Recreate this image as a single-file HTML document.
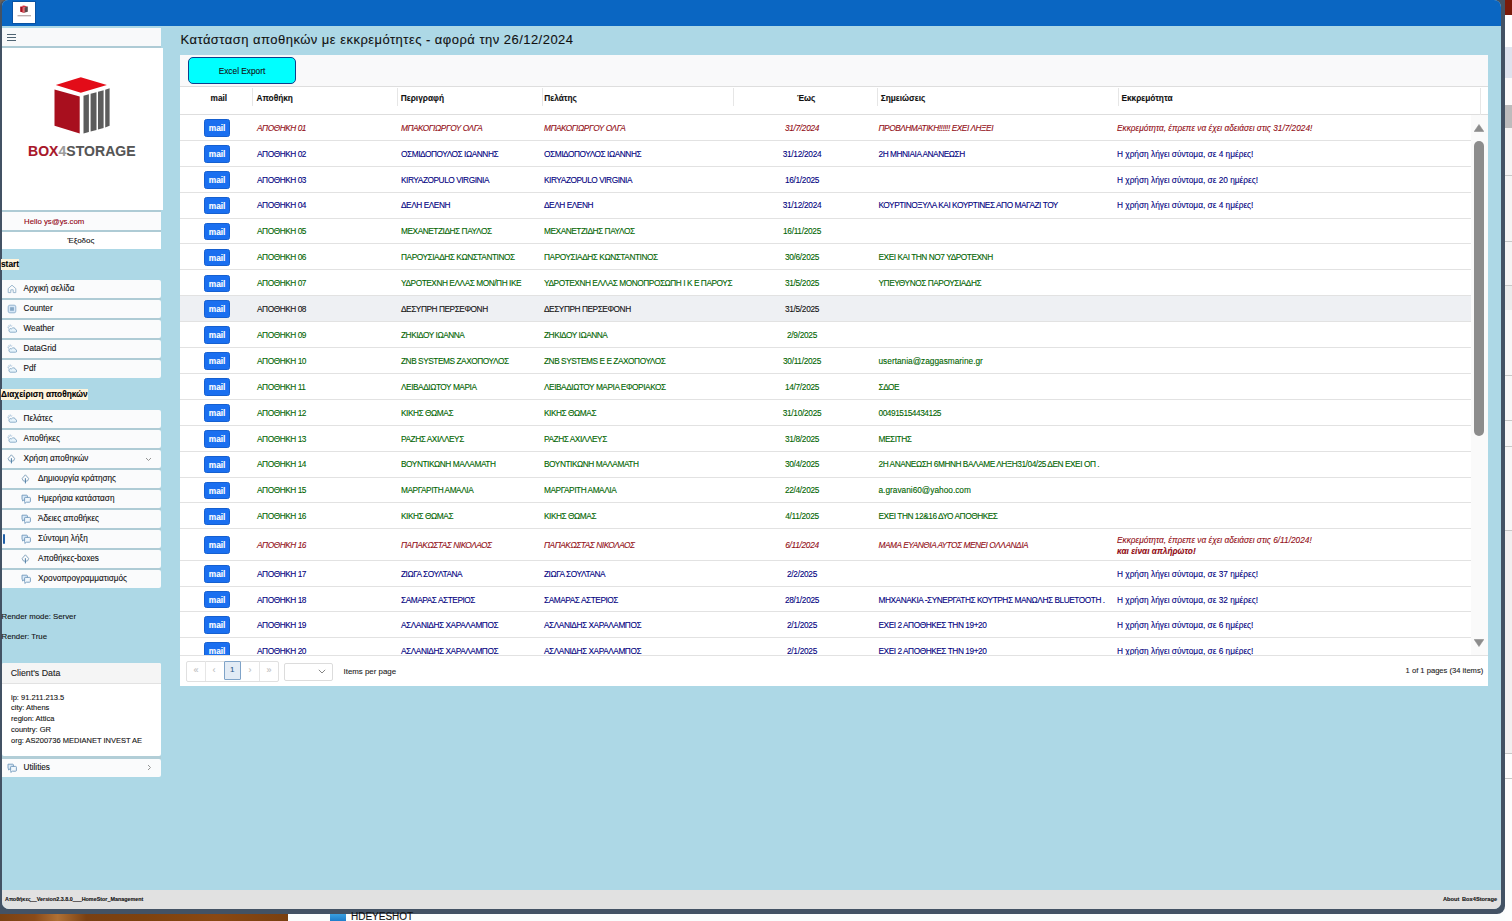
<!DOCTYPE html>
<html><head><meta charset="utf-8">
<style>
*{box-sizing:border-box}
html,body{margin:0;padding:0}
body *{-webkit-text-stroke:0.1px currentColor}
body{width:1512px;height:921px;overflow:hidden;position:relative;background:#fbfcfc;font-family:"Liberation Sans",sans-serif;color:#111}
.a{position:absolute}
#frame{left:0;top:0;width:1505px;height:913.5px;background:#435264;border-radius:6px 0 8px 0}
#win{left:1.5px;top:0;width:1499px;height:909px;background:#add8e6;border-radius:6px 7px 7px 7px;overflow:hidden}
#title{left:1.5px;top:0;width:1499px;height:25.5px;background:#0a66c2;border-radius:6px 7px 0 0}
#appicon{left:13px;top:2px;width:22px;height:21px;background:#fff}
#footer{left:1.5px;top:890px;width:1499px;height:19px;background:#e1e1e1;border-radius:0 0 7px 7px;font-size:5.4px;font-weight:bold;color:#111}
.sb{position:absolute;left:1.5px;width:159.5px;background:#fafbfc}
.gap{position:absolute;left:1.5px;width:159.5px;height:2px;background:#aecbd5}
.nav{position:absolute;left:1.5px;width:159.5px;height:18px;background:#fafbfc;border-radius:0 2px 2px 0}
.nav .ic{position:absolute;top:3.6px;line-height:0}
.nav .nt{position:absolute;top:0;line-height:18px;font-size:8.2px;color:#111;white-space:nowrap}
.nav .chev{position:absolute}
.nav .ind{position:absolute;left:1.5px;top:4px;width:2px;height:10px;background:#1f5fa8;border-radius:1px}
.lbl{position:absolute;left:1px;background:#fff5dc;font-weight:bold;font-size:8.3px;color:#000;white-space:nowrap}
#panel{left:180px;top:54.5px;width:1307.8px;height:631.4px;background:#fff}
#toolbar{left:180px;top:54.5px;width:1307.8px;height:32px;background:#f9f9fa;border-bottom:1px solid #dedede}
#excel{left:188.4px;top:57.2px;width:107.2px;height:26.4px;background:#00ffff;border:1.8px solid #0f3f8c;border-radius:5px;font-size:8.3px;text-align:center;line-height:27px;color:#111}
#hdr{left:180px;top:87px;width:1307.8px;height:28px;border-bottom:1px solid #dedede;background:#fff}
.hs{position:absolute;top:1px;width:1px;height:18px;background:#e6e6e6}
.ht{position:absolute;top:5.5px;font-size:8.3px;font-weight:bold;white-space:nowrap;color:#111}
#body{left:180px;top:115px;width:1291px;height:539.8px;overflow:hidden}
.row{position:absolute;left:0;width:1291px;border-bottom:1px solid #e2e2e2}
.row.hv{background:#eef0f3}
.mb{position:absolute;left:24.2px;width:25.8px;height:17.6px;background:#1a6ff0;border:0.6px solid #1660d0;border-radius:2.5px;color:#fff;font-size:8.3px;font-weight:bold;text-align:center;line-height:17px}
.c{position:absolute;top:0.8px;line-height:25px;font-size:8.3px;white-space:nowrap}
.c.u{letter-spacing:-0.45px}
.c.d{left:552px;width:140px;text-align:center;letter-spacing:-0.3px}
.row.r .c{color:#920c14;font-style:italic}
.row.n .c{color:#000080}
.row.g .c{color:#006400}
.row.k .c{color:#111}
.row.tall .c{line-height:31px}
.row.tall .c.x2{line-height:11.6px;top:5.2px}
#scroll{left:1471px;top:115px;width:16.8px;height:539.8px;background:#fafafa}
#pager{left:180px;top:654.8px;width:1307.8px;height:31.1px;border-top:1px solid #e2e2e2;background:#fff}
</style></head><body>
<div class="a" style="left:0;top:0;width:8px;height:8px;background:#6a6058"></div><div class="a" style="left:0;top:905px;width:10px;height:9px;background:#4a5868"></div>
<div class="a" style="left:1494px;top:0;width:11.5px;height:10px;background:#4d5158"></div>
<div id="frame" class="a"></div>
<div id="win" class="a"></div>
<div id="title" class="a"></div>
<div id="appicon" class="a" style="box-shadow:0 0 0 0.8px #0a4f9c">
 <svg width="22" height="21" viewBox="0 0 22 21"><path d="M7.5 4.2 L10.8 3.6 L14.8 4.4 L11.2 5.2 Z" fill="#d8303a"/><path d="M7.2 4.6 L11 5.6 V10.8 L7.2 9.8 Z" fill="#a80f1e"/><path d="M11 5.6 L14.8 4.6 V9.8 L11 10.8 Z" fill="#5a4a4a"/><rect x="9.5" y="5.6" width="2.2" height="5" fill="#e26a70"/><rect x="4.5" y="13.2" width="13.5" height="1.1" fill="#6a4848" opacity="0.55"/></svg>
</div>

<!-- sidebar -->
<div class="sb" style="top:28.3px;height:17.5px;background:#f8f9fa"></div>
<div class="a" style="left:7px;top:34px;width:9px;height:1px;background:#4f6473"></div><div class="a" style="left:7px;top:37px;width:9px;height:1px;background:#4f6473"></div><div class="a" style="left:7px;top:40px;width:9px;height:1px;background:#4f6473"></div>
<div class="gap" style="top:45.8px;height:2.2px"></div>
<div class="sb" style="top:48px;height:162px;width:161.8px;background:#fff"></div>
<!-- logo -->
<svg class="a" style="left:50px;top:74px" width="64" height="64" viewBox="50 74 64 64">
 <path d="M55.8 85.1 L80.8 77.2 L106.9 85.1 L80.8 92.7 Z" fill="#e30c18"/>
 <path d="M54.5 89.4 L79.7 96.5 L79.7 133.4 L54.5 125.8 Z" fill="#a80f1e"/>
 <path d="M83.5 95.8 L88.9 94.3 L88.9 132.0 L83.5 133.4 Z" fill="#5c5c5c"/>
 <path d="M90.6 93.8 L96.5 92.2 L96.5 130.1 L90.6 131.6 Z" fill="#5c5c5c"/>
 <path d="M98.0 91.8 L103.6 90.2 L103.6 128.0 L98.0 129.6 Z" fill="#5c5c5c"/>
 <path d="M105.2 89.7 L109.6 88.3 L109.6 125.8 L105.2 127.4 Z" fill="#5c5c5c"/>
</svg>
<div class="a" style="left:28px;top:142px;font-size:14px;font-weight:bold;letter-spacing:0.05px;white-space:nowrap;line-height:18px"><span style="color:#a8172a">BOX</span><span style="color:#9c9c9c">4</span><span style="color:#555">STORAGE</span></div>
<div class="gap" style="top:210px"></div>
<div class="sb" style="top:212px;height:18px"></div>
<div class="a" style="left:24px;top:212.5px;line-height:18px;font-size:7.8px;color:#900010;white-space:nowrap">Hello ys@ys.com</div>
<div class="gap" style="top:230px"></div>
<div class="sb" style="top:232px;height:17px;background:#fff"></div>
<div class="a" style="left:67.5px;top:232px;line-height:17px;font-size:8px;color:#111;white-space:nowrap">Έξοδος</div>

<div class="lbl" style="top:259px;height:10.5px;line-height:10.5px">start</div>
<div class="nav" style="top:280px"><span class="ic" style="left:5px"><svg width="10" height="10" viewBox="0 0 10 10"><path d="M1.2 4.6 L5 1.2 L8.8 4.6 V8.6 H6.2 V5.8 H3.8 V8.6 H1.2 Z" fill="none" stroke="#98b4cb" stroke-width="0.95" stroke-linejoin="round"/></svg></span><span class="nt" style="left:22px">Αρχική σελίδα</span></div>
<div class="nav" style="top:300px"><span class="ic" style="left:5px"><svg width="10" height="10" viewBox="0 0 10 10"><rect x="1.2" y="1.2" width="7.6" height="7.6" rx="1.6" fill="#d6e7f7" stroke="#90b0cc" stroke-width="0.95"/><path d="M4 3.2V6.8M6 3.2V6.8M3.2 4.1H6.8M3.2 5.9H6.8" stroke="#5f88ad" stroke-width="0.75"/></svg></span><span class="nt" style="left:22px">Counter</span></div>
<div class="nav" style="top:320px"><span class="ic" style="left:5px"><svg width="10" height="10" viewBox="0 0 10 10"><path d="M3.2 0.4V1.3M0.4 3.2H1.3M1.2 1.2L1.8 1.8M5.2 1.2L4.6 1.8M1.2 5.2L1.8 4.6" stroke="#98b8d2" stroke-width="0.7"/><path d="M2.0 4.6 A1.6 1.6 0 0 1 4.6 2.4" fill="none" stroke="#98b8d2" stroke-width="0.8"/><path d="M3.0 8.2 H8.4 A1.3 1.3 0 0 0 8.6 5.6 A2.2 2.2 0 0 0 4.6 4.8 A1.7 1.7 0 0 0 3.0 8.2 Z" fill="#e6f3fb" stroke="#7ea3c2" stroke-width="0.85"/></svg></span><span class="nt" style="left:22px">Weather</span></div>
<div class="nav" style="top:340px"><span class="ic" style="left:5px"><svg width="10" height="10" viewBox="0 0 10 10"><path d="M3.2 0.4V1.3M0.4 3.2H1.3M1.2 1.2L1.8 1.8M5.2 1.2L4.6 1.8M1.2 5.2L1.8 4.6" stroke="#98b8d2" stroke-width="0.7"/><path d="M2.0 4.6 A1.6 1.6 0 0 1 4.6 2.4" fill="none" stroke="#98b8d2" stroke-width="0.8"/><path d="M3.0 8.2 H8.4 A1.3 1.3 0 0 0 8.6 5.6 A2.2 2.2 0 0 0 4.6 4.8 A1.7 1.7 0 0 0 3.0 8.2 Z" fill="#e6f3fb" stroke="#7ea3c2" stroke-width="0.85"/></svg></span><span class="nt" style="left:22px">DataGrid</span></div>
<div class="nav" style="top:360px"><span class="ic" style="left:5px"><svg width="10" height="10" viewBox="0 0 10 10"><path d="M3.2 0.4V1.3M0.4 3.2H1.3M1.2 1.2L1.8 1.8M5.2 1.2L4.6 1.8M1.2 5.2L1.8 4.6" stroke="#98b8d2" stroke-width="0.7"/><path d="M2.0 4.6 A1.6 1.6 0 0 1 4.6 2.4" fill="none" stroke="#98b8d2" stroke-width="0.8"/><path d="M3.0 8.2 H8.4 A1.3 1.3 0 0 0 8.6 5.6 A2.2 2.2 0 0 0 4.6 4.8 A1.7 1.7 0 0 0 3.0 8.2 Z" fill="#e6f3fb" stroke="#7ea3c2" stroke-width="0.85"/></svg></span><span class="nt" style="left:22px">Pdf</span></div>
<div class="nav" style="top:410px"><span class="ic" style="left:5px"><svg width="10" height="10" viewBox="0 0 10 10"><path d="M3.2 0.4V1.3M0.4 3.2H1.3M1.2 1.2L1.8 1.8M5.2 1.2L4.6 1.8M1.2 5.2L1.8 4.6" stroke="#98b8d2" stroke-width="0.7"/><path d="M2.0 4.6 A1.6 1.6 0 0 1 4.6 2.4" fill="none" stroke="#98b8d2" stroke-width="0.8"/><path d="M3.0 8.2 H8.4 A1.3 1.3 0 0 0 8.6 5.6 A2.2 2.2 0 0 0 4.6 4.8 A1.7 1.7 0 0 0 3.0 8.2 Z" fill="#e6f3fb" stroke="#7ea3c2" stroke-width="0.85"/></svg></span><span class="nt" style="left:22px">Πελάτες</span></div>
<div class="nav" style="top:430px"><span class="ic" style="left:5px"><svg width="10" height="10" viewBox="0 0 10 10"><path d="M3.2 0.4V1.3M0.4 3.2H1.3M1.2 1.2L1.8 1.8M5.2 1.2L4.6 1.8M1.2 5.2L1.8 4.6" stroke="#98b8d2" stroke-width="0.7"/><path d="M2.0 4.6 A1.6 1.6 0 0 1 4.6 2.4" fill="none" stroke="#98b8d2" stroke-width="0.8"/><path d="M3.0 8.2 H8.4 A1.3 1.3 0 0 0 8.6 5.6 A2.2 2.2 0 0 0 4.6 4.8 A1.7 1.7 0 0 0 3.0 8.2 Z" fill="#e6f3fb" stroke="#7ea3c2" stroke-width="0.85"/></svg></span><span class="nt" style="left:22px">Αποθήκες</span></div>
<div class="nav" style="top:450px"><svg class="chev" style="left:143.5px;top:6.5px" width="7" height="5" viewBox="0 0 7 5"><path d="M1 1 L3.5 3.5 L6 1" fill="none" stroke="#888" stroke-width="0.9"/></svg><span class="ic" style="left:5px"><svg width="10" height="10" viewBox="0 0 10 10"><path d="M4.4 0.8 L7.6 4.4 A3.2 3.0 0 0 1 1.2 4.4 Z" fill="none" stroke="#7b9cb8" stroke-width="0.9" stroke-linejoin="round"/><path d="M4.4 4.2 V9.4" stroke="#4f7fa6" stroke-width="1"/></svg></span><span class="nt" style="left:22px">Χρήση αποθηκών</span></div>
<div class="nav" style="top:470px"><span class="ic" style="left:19.5px"><svg width="10" height="10" viewBox="0 0 10 10"><path d="M4.4 0.8 L7.6 4.4 A3.2 3.0 0 0 1 1.2 4.4 Z" fill="none" stroke="#7b9cb8" stroke-width="0.9" stroke-linejoin="round"/><path d="M4.4 4.2 V9.4" stroke="#4f7fa6" stroke-width="1"/></svg></span><span class="nt" style="left:36.5px">Δημιουργία κράτησης</span></div>
<div class="nav" style="top:490px"><span class="ic" style="left:19.5px"><svg width="10" height="10" viewBox="0 0 10 10"><path d="M1.0 1.2 H5.6 A0.8 0.8 0 0 1 6.4 2.0 V5.0 A0.8 0.8 0 0 1 5.6 5.8 H3.0 L1.6 7.0 V5.8 A0.6 0.6 0 0 1 1.0 5.2 Z" fill="#dbeaf7" stroke="#6f97bb" stroke-width="0.9" stroke-linejoin="round"/><path d="M4.2 3.4 H8.6 A0.8 0.8 0 0 1 9.4 4.2 V7.4 A0.8 0.8 0 0 1 8.6 8.2 H5.4 L3.8 9.4 V8.2 A0.6 0.6 0 0 1 3.6 7.6 V4.0 A0.6 0.6 0 0 1 4.2 3.4 Z" fill="#f0f7fc" stroke="#6f97bb" stroke-width="0.9" stroke-linejoin="round"/></svg></span><span class="nt" style="left:36.5px">Ημερήσια κατάσταση</span></div>
<div class="nav" style="top:510px"><span class="ic" style="left:19.5px"><svg width="10" height="10" viewBox="0 0 10 10"><path d="M1.0 1.2 H5.6 A0.8 0.8 0 0 1 6.4 2.0 V5.0 A0.8 0.8 0 0 1 5.6 5.8 H3.0 L1.6 7.0 V5.8 A0.6 0.6 0 0 1 1.0 5.2 Z" fill="#dbeaf7" stroke="#6f97bb" stroke-width="0.9" stroke-linejoin="round"/><path d="M4.2 3.4 H8.6 A0.8 0.8 0 0 1 9.4 4.2 V7.4 A0.8 0.8 0 0 1 8.6 8.2 H5.4 L3.8 9.4 V8.2 A0.6 0.6 0 0 1 3.6 7.6 V4.0 A0.6 0.6 0 0 1 4.2 3.4 Z" fill="#f0f7fc" stroke="#6f97bb" stroke-width="0.9" stroke-linejoin="round"/></svg></span><span class="nt" style="left:36.5px">Άδειες αποθήκες</span></div>
<div class="nav" style="top:530px"><div class="ind"></div><span class="ic" style="left:19.5px"><svg width="10" height="10" viewBox="0 0 10 10"><path d="M1.0 1.2 H5.6 A0.8 0.8 0 0 1 6.4 2.0 V5.0 A0.8 0.8 0 0 1 5.6 5.8 H3.0 L1.6 7.0 V5.8 A0.6 0.6 0 0 1 1.0 5.2 Z" fill="#dbeaf7" stroke="#6f97bb" stroke-width="0.9" stroke-linejoin="round"/><path d="M4.2 3.4 H8.6 A0.8 0.8 0 0 1 9.4 4.2 V7.4 A0.8 0.8 0 0 1 8.6 8.2 H5.4 L3.8 9.4 V8.2 A0.6 0.6 0 0 1 3.6 7.6 V4.0 A0.6 0.6 0 0 1 4.2 3.4 Z" fill="#f0f7fc" stroke="#6f97bb" stroke-width="0.9" stroke-linejoin="round"/></svg></span><span class="nt" style="left:36.5px">Σύντομη λήξη</span></div>
<div class="nav" style="top:550px"><span class="ic" style="left:19.5px"><svg width="10" height="10" viewBox="0 0 10 10"><path d="M4.4 0.8 L7.6 4.4 A3.2 3.0 0 0 1 1.2 4.4 Z" fill="none" stroke="#7b9cb8" stroke-width="0.9" stroke-linejoin="round"/><path d="M4.4 4.2 V9.4" stroke="#4f7fa6" stroke-width="1"/></svg></span><span class="nt" style="left:36.5px">Αποθήκες-boxes</span></div>
<div class="nav" style="top:570px"><span class="ic" style="left:19.5px"><svg width="10" height="10" viewBox="0 0 10 10"><path d="M1.0 1.2 H5.6 A0.8 0.8 0 0 1 6.4 2.0 V5.0 A0.8 0.8 0 0 1 5.6 5.8 H3.0 L1.6 7.0 V5.8 A0.6 0.6 0 0 1 1.0 5.2 Z" fill="#dbeaf7" stroke="#6f97bb" stroke-width="0.9" stroke-linejoin="round"/><path d="M4.2 3.4 H8.6 A0.8 0.8 0 0 1 9.4 4.2 V7.4 A0.8 0.8 0 0 1 8.6 8.2 H5.4 L3.8 9.4 V8.2 A0.6 0.6 0 0 1 3.6 7.6 V4.0 A0.6 0.6 0 0 1 4.2 3.4 Z" fill="#f0f7fc" stroke="#6f97bb" stroke-width="0.9" stroke-linejoin="round"/></svg></span><span class="nt" style="left:36.5px">Χρονοπρογραμματισμός</span></div>
<div class="gap" style="top:298px"></div>
<div class="gap" style="top:318px"></div>
<div class="gap" style="top:338px"></div>
<div class="gap" style="top:358px"></div>
<div class="gap" style="top:428px"></div>
<div class="gap" style="top:448px"></div>
<div class="gap" style="top:468px"></div>
<div class="gap" style="top:488px"></div>
<div class="gap" style="top:508px"></div>
<div class="gap" style="top:528px"></div>
<div class="gap" style="top:548px"></div>
<div class="gap" style="top:568px"></div>
<div class="lbl" style="top:389.2px;height:10.6px;line-height:10.6px">Διαχείριση αποθηκών</div>

<div class="a" style="left:1.5px;top:612px;font-size:7.8px;line-height:10px;white-space:nowrap;color:#111">Render mode: Server</div>
<div class="a" style="left:1.5px;top:632px;font-size:7.8px;line-height:10px;white-space:nowrap;color:#111">Render: True</div>

<div class="sb" style="top:662.8px;height:93.2px;background:#fff;border-radius:2px"></div>
<div class="sb" style="top:662.8px;height:21px;background:#f5f5f5;border-bottom:1px solid #e2e2e2;border-radius:2px 2px 0 0"></div>
<div class="a" style="left:10.7px;top:663px;line-height:20px;font-size:8.8px;color:#222;white-space:nowrap">Client's Data</div>
<div class="a" style="left:11px;top:692.5px;line-height:10.9px;font-size:7.5px;color:#111;white-space:nowrap">ip: 91.211.213.5<br>city: Athens<br>region: Attica<br>country: GR<br>org: AS200736 MEDIANET INVEST AE</div>
<div class="gap" style="top:756px;height:3px;background:#b2ced7"></div>
<div class="nav" style="top:759px">
 <span class="ic" style="left:5px"><svg width="10" height="10" viewBox="0 0 10 10"><path d="M1.0 1.2 H5.6 A0.8 0.8 0 0 1 6.4 2.0 V5.0 A0.8 0.8 0 0 1 5.6 5.8 H3.0 L1.6 7.0 V5.8 A0.6 0.6 0 0 1 1.0 5.2 Z" fill="#dbeaf7" stroke="#6f97bb" stroke-width="0.9" stroke-linejoin="round"/><path d="M4.2 3.4 H8.6 A0.8 0.8 0 0 1 9.4 4.2 V7.4 A0.8 0.8 0 0 1 8.6 8.2 H5.4 L3.8 9.4 V8.2 A0.6 0.6 0 0 1 3.6 7.6 V4.0 A0.6 0.6 0 0 1 4.2 3.4 Z" fill="#f0f7fc" stroke="#6f97bb" stroke-width="0.9" stroke-linejoin="round"/></svg></span><span class="nt" style="left:22px">Utilities</span>
 <svg class="chev" style="left:145px;top:4.5px" width="5" height="7" viewBox="0 0 5 7"><path d="M1 1 L3.5 3.5 L1 6" fill="none" stroke="#888" stroke-width="0.9"/></svg>
</div>

<!-- content -->
<div class="a" style="left:180.5px;top:31px;font-size:13px;letter-spacing:0.47px;line-height:18px;white-space:nowrap;color:#111">Κατάσταση αποθηκών με εκκρεμότητες - αφορά την 26/12/2024</div>
<div id="panel" class="a"></div>
<div id="toolbar" class="a"></div>
<div id="excel" class="a">Excel Export</div>
<div id="hdr" class="a">
 <div class="hs" style="left:72.3px"></div>
 <div class="hs" style="left:216.7px"></div>
 <div class="hs" style="left:361.5px"></div>
 <div class="hs" style="left:553.3px"></div>
 <div class="hs" style="left:697.4px"></div>
 <div class="hs" style="left:937.6px"></div>
 <div class="hs" style="left:1299.6px;height:27px"></div>
 <div class="ht" style="left:30.5px">mail</div>
 <div class="ht" style="left:76.5px">Αποθήκη</div>
 <div class="ht" style="left:220.8px">Περιγραφή</div>
 <div class="ht" style="left:364.3px">Πελάτης</div>
 <div class="ht" style="left:617px">Έως</div>
 <div class="ht" style="left:700.7px">Σημειώσεις</div>
 <div class="ht" style="left:941.4px">Εκκρεμότητα</div>
</div>
<div id="body" class="a">
<div class="row r" style="top:0.00px;height:25.90px"><div class="mb" style="top:4.15px">mail</div><div class="c u" style="left:77px">ΑΠΟΘΗΚΗ 01</div><div class="c u" style="left:221px">ΜΠΑΚΟΓΙΩΡΓΟΥ ΟΛΓΑ</div><div class="c u" style="left:364px">ΜΠΑΚΟΓΙΩΡΓΟΥ ΟΛΓΑ</div><div class="c u d">31/7/2024</div><div class="c u" style="left:698.5px">ΠΡΟΒΛΗΜΑΤΙΚΗ!!!!!! ΕΧΕΙ ΛΗΞΕΙ</div><div class="c" style="left:937px">Εκκρεμότητα, έπρεπε να έχει αδειάσει στις 31/7/2024!</div></div>
<div class="row n" style="top:25.90px;height:25.90px"><div class="mb" style="top:4.15px">mail</div><div class="c u" style="left:77px">ΑΠΟΘΗΚΗ 02</div><div class="c u" style="left:221px">ΟΣΜΙΔΟΠΟΥΛΟΣ ΙΩΑΝΝΗΣ</div><div class="c u" style="left:364px">ΟΣΜΙΔΟΠΟΥΛΟΣ ΙΩΑΝΝΗΣ</div><div class="c u d">31/12/2024</div><div class="c u" style="left:698.5px">2Η ΜΗΝΙΑΙΑ ΑΝΑΝΕΩΣΗ</div><div class="c" style="left:937px">Η χρήση λήγει σύντομα, σε 4 ημέρες!</div></div>
<div class="row n" style="top:51.80px;height:25.90px"><div class="mb" style="top:4.15px">mail</div><div class="c u" style="left:77px">ΑΠΟΘΗΚΗ 03</div><div class="c u" style="left:221px">KIRYAZOPULO VIRGINIA</div><div class="c u" style="left:364px">KIRYAZOPULO VIRGINIA</div><div class="c u d">16/1/2025</div><div class="c" style="left:937px">Η χρήση λήγει σύντομα, σε 20 ημέρες!</div></div>
<div class="row n" style="top:77.70px;height:25.90px"><div class="mb" style="top:4.15px">mail</div><div class="c u" style="left:77px">ΑΠΟΘΗΚΗ 04</div><div class="c u" style="left:221px">ΔΕΛΗ ΕΛΕΝΗ</div><div class="c u" style="left:364px">ΔΕΛΗ ΕΛΕΝΗ</div><div class="c u d">31/12/2024</div><div class="c u" style="left:698.5px">ΚΟΥΡΤΙΝΟΞΥΛΑ ΚΑΙ ΚΟΥΡΤΙΝΕΣ ΑΠΟ ΜΑΓΑΖΙ ΤΟΥ</div><div class="c" style="left:937px">Η χρήση λήγει σύντομα, σε 4 ημέρες!</div></div>
<div class="row g" style="top:103.60px;height:25.90px"><div class="mb" style="top:4.15px">mail</div><div class="c u" style="left:77px">ΑΠΟΘΗΚΗ 05</div><div class="c u" style="left:221px">ΜΕΧΑΝΕΤΖΙΔΗΣ ΠΑΥΛΟΣ</div><div class="c u" style="left:364px">ΜΕΧΑΝΕΤΖΙΔΗΣ ΠΑΥΛΟΣ</div><div class="c u d">16/11/2025</div></div>
<div class="row g" style="top:129.50px;height:25.90px"><div class="mb" style="top:4.15px">mail</div><div class="c u" style="left:77px">ΑΠΟΘΗΚΗ 06</div><div class="c u" style="left:221px">ΠΑΡΟΥΣΙΑΔΗΣ ΚΩΝΣΤΑΝΤΙΝΟΣ</div><div class="c u" style="left:364px">ΠΑΡΟΥΣΙΑΔΗΣ ΚΩΝΣΤΑΝΤΙΝΟΣ</div><div class="c u d">30/6/2025</div><div class="c u" style="left:698.5px">ΕΧΕΙ ΚΑΙ ΤΗΝ ΝΟ7 ΥΔΡΟΤΕΧΝΗ</div></div>
<div class="row g" style="top:155.40px;height:25.90px"><div class="mb" style="top:4.15px">mail</div><div class="c u" style="left:77px">ΑΠΟΘΗΚΗ 07</div><div class="c u" style="left:221px">ΥΔΡΟΤΕΧΝΗ ΕΛΛΑΣ ΜΟΝ/ΠΗ ΙΚΕ</div><div class="c u" style="left:364px">ΥΔΡΟΤΕΧΝΗ ΕΛΛΑΣ ΜΟΝΟΠΡΟΣΩΠΗ Ι Κ Ε ΠΑΡΟΥΣ</div><div class="c u d">31/5/2025</div><div class="c u" style="left:698.5px">ΥΠΕΥΘΥΝΟΣ ΠΑΡΟΥΣΙΑΔΗΣ</div></div>
<div class="row k hv" style="top:181.30px;height:25.90px"><div class="mb" style="top:4.15px">mail</div><div class="c u" style="left:77px">ΑΠΟΘΗΚΗ 08</div><div class="c u" style="left:221px">ΔΕΣΥΠΡΗ ΠΕΡΣΕΦΟΝΗ</div><div class="c u" style="left:364px">ΔΕΣΥΠΡΗ ΠΕΡΣΕΦΟΝΗ</div><div class="c u d">31/5/2025</div></div>
<div class="row g" style="top:207.20px;height:25.90px"><div class="mb" style="top:4.15px">mail</div><div class="c u" style="left:77px">ΑΠΟΘΗΚΗ 09</div><div class="c u" style="left:221px">ΖΗΚΙΔΟΥ ΙΩΑΝΝΑ</div><div class="c u" style="left:364px">ΖΗΚΙΔΟΥ ΙΩΑΝΝΑ</div><div class="c u d">2/9/2025</div></div>
<div class="row g" style="top:233.10px;height:25.90px"><div class="mb" style="top:4.15px">mail</div><div class="c u" style="left:77px">ΑΠΟΘΗΚΗ 10</div><div class="c u" style="left:221px">ZNB SYSTEMS ΖΑΧΟΠΟΥΛΟΣ</div><div class="c u" style="left:364px">ZNB SYSTEMS Ε Ε ΖΑΧΟΠΟΥΛΟΣ</div><div class="c u d">30/11/2025</div><div class="c" style="left:698.5px">usertania@zaggasmarine.gr</div></div>
<div class="row g" style="top:259.00px;height:25.90px"><div class="mb" style="top:4.15px">mail</div><div class="c u" style="left:77px">ΑΠΟΘΗΚΗ 11</div><div class="c u" style="left:221px">ΛΕΙΒΑΔΙΩΤΟΥ ΜΑΡΙΑ</div><div class="c u" style="left:364px">ΛΕΙΒΑΔΙΩΤΟΥ ΜΑΡΙΑ ΕΦΟΡΙΑΚΟΣ</div><div class="c u d">14/7/2025</div><div class="c u" style="left:698.5px">ΣΔΟΕ</div></div>
<div class="row g" style="top:284.90px;height:25.90px"><div class="mb" style="top:4.15px">mail</div><div class="c u" style="left:77px">ΑΠΟΘΗΚΗ 12</div><div class="c u" style="left:221px">ΚΙΚΗΣ ΘΩΜΑΣ</div><div class="c u" style="left:364px">ΚΙΚΗΣ ΘΩΜΑΣ</div><div class="c u d">31/10/2025</div><div class="c u" style="left:698.5px">004915154434125</div></div>
<div class="row g" style="top:310.80px;height:25.90px"><div class="mb" style="top:4.15px">mail</div><div class="c u" style="left:77px">ΑΠΟΘΗΚΗ 13</div><div class="c u" style="left:221px">ΡΑΖΗΣ ΑΧΙΛΛΕΥΣ</div><div class="c u" style="left:364px">ΡΑΖΗΣ ΑΧΙΛΛΕΥΣ</div><div class="c u d">31/8/2025</div><div class="c u" style="left:698.5px">ΜΕΣΙΤΗΣ</div></div>
<div class="row g" style="top:336.70px;height:25.90px"><div class="mb" style="top:4.15px">mail</div><div class="c u" style="left:77px">ΑΠΟΘΗΚΗ 14</div><div class="c u" style="left:221px">ΒΟΥΝΤΙΚΩΝΗ ΜΑΛΑΜΑΤΗ</div><div class="c u" style="left:364px">ΒΟΥΝΤΙΚΩΝΗ ΜΑΛΑΜΑΤΗ</div><div class="c u d">30/4/2025</div><div class="c u" style="left:698.5px">2Η ΑΝΑΝΕΩΣΗ 6ΜΗΝΗ ΒΑΛΑΜΕ ΛΗΞΗ31/04/25 ΔΕΝ ΕΧΕΙ ΟΠ .</div></div>
<div class="row g" style="top:362.60px;height:25.90px"><div class="mb" style="top:4.15px">mail</div><div class="c u" style="left:77px">ΑΠΟΘΗΚΗ 15</div><div class="c u" style="left:221px">ΜΑΡΓΑΡΙΤΗ ΑΜΑΛΙΑ</div><div class="c u" style="left:364px">ΜΑΡΓΑΡΙΤΗ ΑΜΑΛΙΑ</div><div class="c u d">22/4/2025</div><div class="c" style="left:698.5px">a.gravani60@yahoo.com</div></div>
<div class="row g" style="top:388.50px;height:25.90px"><div class="mb" style="top:4.15px">mail</div><div class="c u" style="left:77px">ΑΠΟΘΗΚΗ 16</div><div class="c u" style="left:221px">ΚΙΚΗΣ ΘΩΜΑΣ</div><div class="c u" style="left:364px">ΚΙΚΗΣ ΘΩΜΑΣ</div><div class="c u d">4/11/2025</div><div class="c u" style="left:698.5px">ΕΧΕΙ ΤΗΝ 12&amp;16 ΔΥΟ ΑΠΟΘΗΚΕΣ</div></div>
<div class="row r tall" style="top:414.40px;height:31.60px"><div class="mb" style="top:7.00px">mail</div><div class="c u" style="left:77px">ΑΠΟΘΗΚΗ 16</div><div class="c u" style="left:221px">ΠΑΠΑΚΩΣΤΑΣ ΝΙΚΟΛΑΟΣ</div><div class="c u" style="left:364px">ΠΑΠΑΚΩΣΤΑΣ ΝΙΚΟΛΑΟΣ</div><div class="c u d">6/11/2024</div><div class="c u" style="left:698.5px">ΜΑΜΑ ΕΥΑΝΘΙΑ ΑΥΤΟΣ ΜΕΝΕΙ ΟΛΛΑΝΔΙΑ</div><div class="c x2" style="left:937px">Εκκρεμότητα, έπρεπε να έχει αδειάσει στις 6/11/2024!<br><b>και είναι απλήρωτο!</b></div></div>
<div class="row n" style="top:446.00px;height:25.90px"><div class="mb" style="top:4.15px">mail</div><div class="c u" style="left:77px">ΑΠΟΘΗΚΗ 17</div><div class="c u" style="left:221px">ΖΙΩΓΑ ΣΟΥΛΤΑΝΑ</div><div class="c u" style="left:364px">ΖΙΩΓΑ ΣΟΥΛΤΑΝΑ</div><div class="c u d">2/2/2025</div><div class="c" style="left:937px">Η χρήση λήγει σύντομα, σε 37 ημέρες!</div></div>
<div class="row n" style="top:471.90px;height:25.00px"><div class="mb" style="top:3.70px">mail</div><div class="c u" style="left:77px">ΑΠΟΘΗΚΗ 18</div><div class="c u" style="left:221px">ΣΑΜΑΡΑΣ ΑΣΤΕΡΙΟΣ</div><div class="c u" style="left:364px">ΣΑΜΑΡΑΣ ΑΣΤΕΡΙΟΣ</div><div class="c u d">28/1/2025</div><div class="c u" style="left:698.5px">ΜΗΧΑΝΑΚΙΑ -ΣΥΝΕΡΓΑΤΗΣ ΚΟΥΤΡΗΣ ΜΑΝΩΛΗΣ BLUETOOTH .</div><div class="c" style="left:937px">Η χρήση λήγει σύντομα, σε 32 ημέρες!</div></div>
<div class="row n" style="top:496.90px;height:26.00px"><div class="mb" style="top:4.20px">mail</div><div class="c u" style="left:77px">ΑΠΟΘΗΚΗ 19</div><div class="c u" style="left:221px">ΑΣΛΑΝΙΔΗΣ ΧΑΡΑΛΑΜΠΟΣ</div><div class="c u" style="left:364px">ΑΣΛΑΝΙΔΗΣ ΧΑΡΑΛΑΜΠΟΣ</div><div class="c u d">2/1/2025</div><div class="c u" style="left:698.5px">ΕΧΕΙ 2 ΑΠΟΘΗΚΕΣ ΤΗΝ 19+20</div><div class="c" style="left:937px">Η χρήση λήγει σύντομα, σε 6 ημέρες!</div></div>
<div class="row n" style="top:522.90px;height:25.90px"><div class="mb" style="top:4.15px">mail</div><div class="c u" style="left:77px">ΑΠΟΘΗΚΗ 20</div><div class="c u" style="left:221px">ΑΣΛΑΝΙΔΗΣ ΧΑΡΑΛΑΜΠΟΣ</div><div class="c u" style="left:364px">ΑΣΛΑΝΙΔΗΣ ΧΑΡΑΛΑΜΠΟΣ</div><div class="c u d">2/1/2025</div><div class="c u" style="left:698.5px">ΕΧΕΙ 2 ΑΠΟΘΗΚΕΣ ΤΗΝ 19+20</div><div class="c" style="left:937px">Η χρήση λήγει σύντομα, σε 6 ημέρες!</div></div>
</div>
<div id="scroll" class="a">
 <svg class="a" style="left:3px;top:9px" width="10" height="8" viewBox="0 0 10 8"><path d="M5 0.5 L9.8 7.5 H0.2 Z" fill="#8c8c8c" stroke="#8c8c8c" stroke-width="0.6" stroke-linejoin="round"/></svg>
 <div class="a" style="left:3px;top:25.5px;width:10px;height:295px;background:#8c8c8c;border-radius:5px"></div>
 <svg class="a" style="left:3px;top:524px" width="10" height="8" viewBox="0 0 10 8"><path d="M0.2 0.5 H9.8 L5 7.5 Z" fill="#8c8c8c" stroke="#8c8c8c" stroke-width="0.6" stroke-linejoin="round"/></svg>
</div>
<div id="pager" class="a"></div>
<!-- pager controls -->
<div class="a" style="left:186.3px;top:660.5px;width:92.3px;height:21px;border:1px solid #e0e0e0;border-radius:2px;background:#fff"></div>
<div class="a" style="left:205px;top:661px;width:1px;height:20px;background:#e6e6e6"></div>
<div class="a" style="left:259px;top:661px;width:1px;height:20px;background:#e6e6e6"></div>
<div class="a" style="left:223.8px;top:661px;width:17px;height:18.5px;background:#e2ebf5;border:1px solid #7fa3c8;border-radius:1px;font-size:8px;color:#2a5a8a;text-align:center;line-height:16.5px">1</div>
<div class="a" style="left:189px;top:661px;width:14px;height:20px;font-size:9px;color:#bbb;text-align:center;line-height:19px">«</div>
<div class="a" style="left:207px;top:661px;width:14px;height:20px;font-size:9px;color:#bbb;text-align:center;line-height:19px">‹</div>
<div class="a" style="left:243px;top:661px;width:14px;height:20px;font-size:9px;color:#bbb;text-align:center;line-height:19px">›</div>
<div class="a" style="left:262px;top:661px;width:14px;height:20px;font-size:9px;color:#bbb;text-align:center;line-height:19px">»</div>
<div class="a" style="left:284.3px;top:663px;width:48.4px;height:17.7px;border:1px solid #dcdcdc;border-radius:2px;background:#fff"></div>
<svg class="a" style="left:318px;top:668.5px" width="8" height="5" viewBox="0 0 8 5"><path d="M0.8 0.8 L4 4 L7.2 0.8" fill="none" stroke="#777" stroke-width="0.9"/></svg>
<div class="a" style="left:343.5px;top:666.6px;font-size:7.9px;line-height:10px;white-space:nowrap;color:#222">Items per page</div>
<div class="a" style="left:1405.6px;top:666px;font-size:7.6px;line-height:10px;white-space:nowrap;color:#222">1 of 1 pages (34 items)</div>

<!-- footer -->
<div id="footer" class="a">
 <div class="a" style="left:3.5px;top:5px;line-height:9px;white-space:nowrap">Αποθήκες__Version2.3.8.0___HomeStor_Management</div>
 <div class="a" style="left:1441.5px;top:5px;line-height:9px;white-space:nowrap;font-size:5.7px;word-spacing:1px">About Box4Storage</div>
</div>

<!-- desktop bits -->
<div class="a" style="left:0;top:913.5px;width:288px;height:8px;background:linear-gradient(90deg,#7a4212,#8a4a18 12%,#b07034 20%,#7a4012 30%,#7e420e 50%,#8a4812 75%,#7a4010)"></div>
<div class="a" style="left:288px;top:913.5px;width:1224px;height:8px;background:#fbfdfd"></div>
<div class="a" style="left:330px;top:913.5px;width:15.5px;height:8px;background:linear-gradient(180deg,#3aa0e0,#1a78c8)"></div>
<div class="a" style="left:351px;top:909.5px;font-size:10px;line-height:14px;color:#111;white-space:nowrap">HDEYESHOT</div>
<div class="a" style="left:1505px;top:0px;width:7px;height:15px;background:#7a1a0a"></div>
<div class="a" style="left:1505px;top:15px;width:7px;height:32px;background:#fff"></div>
<div class="a" style="left:1505px;top:47px;width:7px;height:31px;background:#dfe3ee"></div>
<div class="a" style="left:1505px;top:78px;width:7px;height:27px;background:#fcfafa"></div>
<div class="a" style="left:1505px;top:105px;width:7px;height:23px;background:#bdbbbc"></div>
<div class="a" style="left:1505px;top:128px;width:7px;height:157px;background:#f6f4f4"></div>
<div class="a" style="left:1505px;top:285px;width:7px;height:25px;background:#ececec"></div>
<div class="a" style="left:1505px;top:310px;width:7px;height:220px;background:#f8f7f7"></div>
<div class="a" style="left:1505px;top:530px;width:7px;height:223px;background:#f2f0f0"></div>
<div class="a" style="left:1505px;top:753px;width:7px;height:168px;background:#fdfdfd"></div>
<div class="a" style="left:1505px;top:175px;width:7px;height:1px;background:#c8c8c8"></div>
<div class="a" style="left:1505px;top:240.5px;width:7px;height:1px;background:#c8c8c8"></div>
<div class="a" style="left:1505px;top:284.5px;width:7px;height:1px;background:#c8c8c8"></div>
<div class="a" style="left:1505px;top:375px;width:7px;height:1px;background:#c8c8c8"></div>
<div class="a" style="left:1505px;top:420px;width:7px;height:1px;background:#c8c8c8"></div>
<div class="a" style="left:1505px;top:445.5px;width:7px;height:1px;background:#c8c8c8"></div>
<div class="a" style="left:1505px;top:530px;width:7px;height:1px;background:#c8c8c8"></div>
<div class="a" style="left:1505px;top:753px;width:7px;height:1px;background:#c8c8c8"></div>
<div class="a" style="left:1505px;top:778px;width:7px;height:1px;background:#c8c8c8"></div>
</body></html>
